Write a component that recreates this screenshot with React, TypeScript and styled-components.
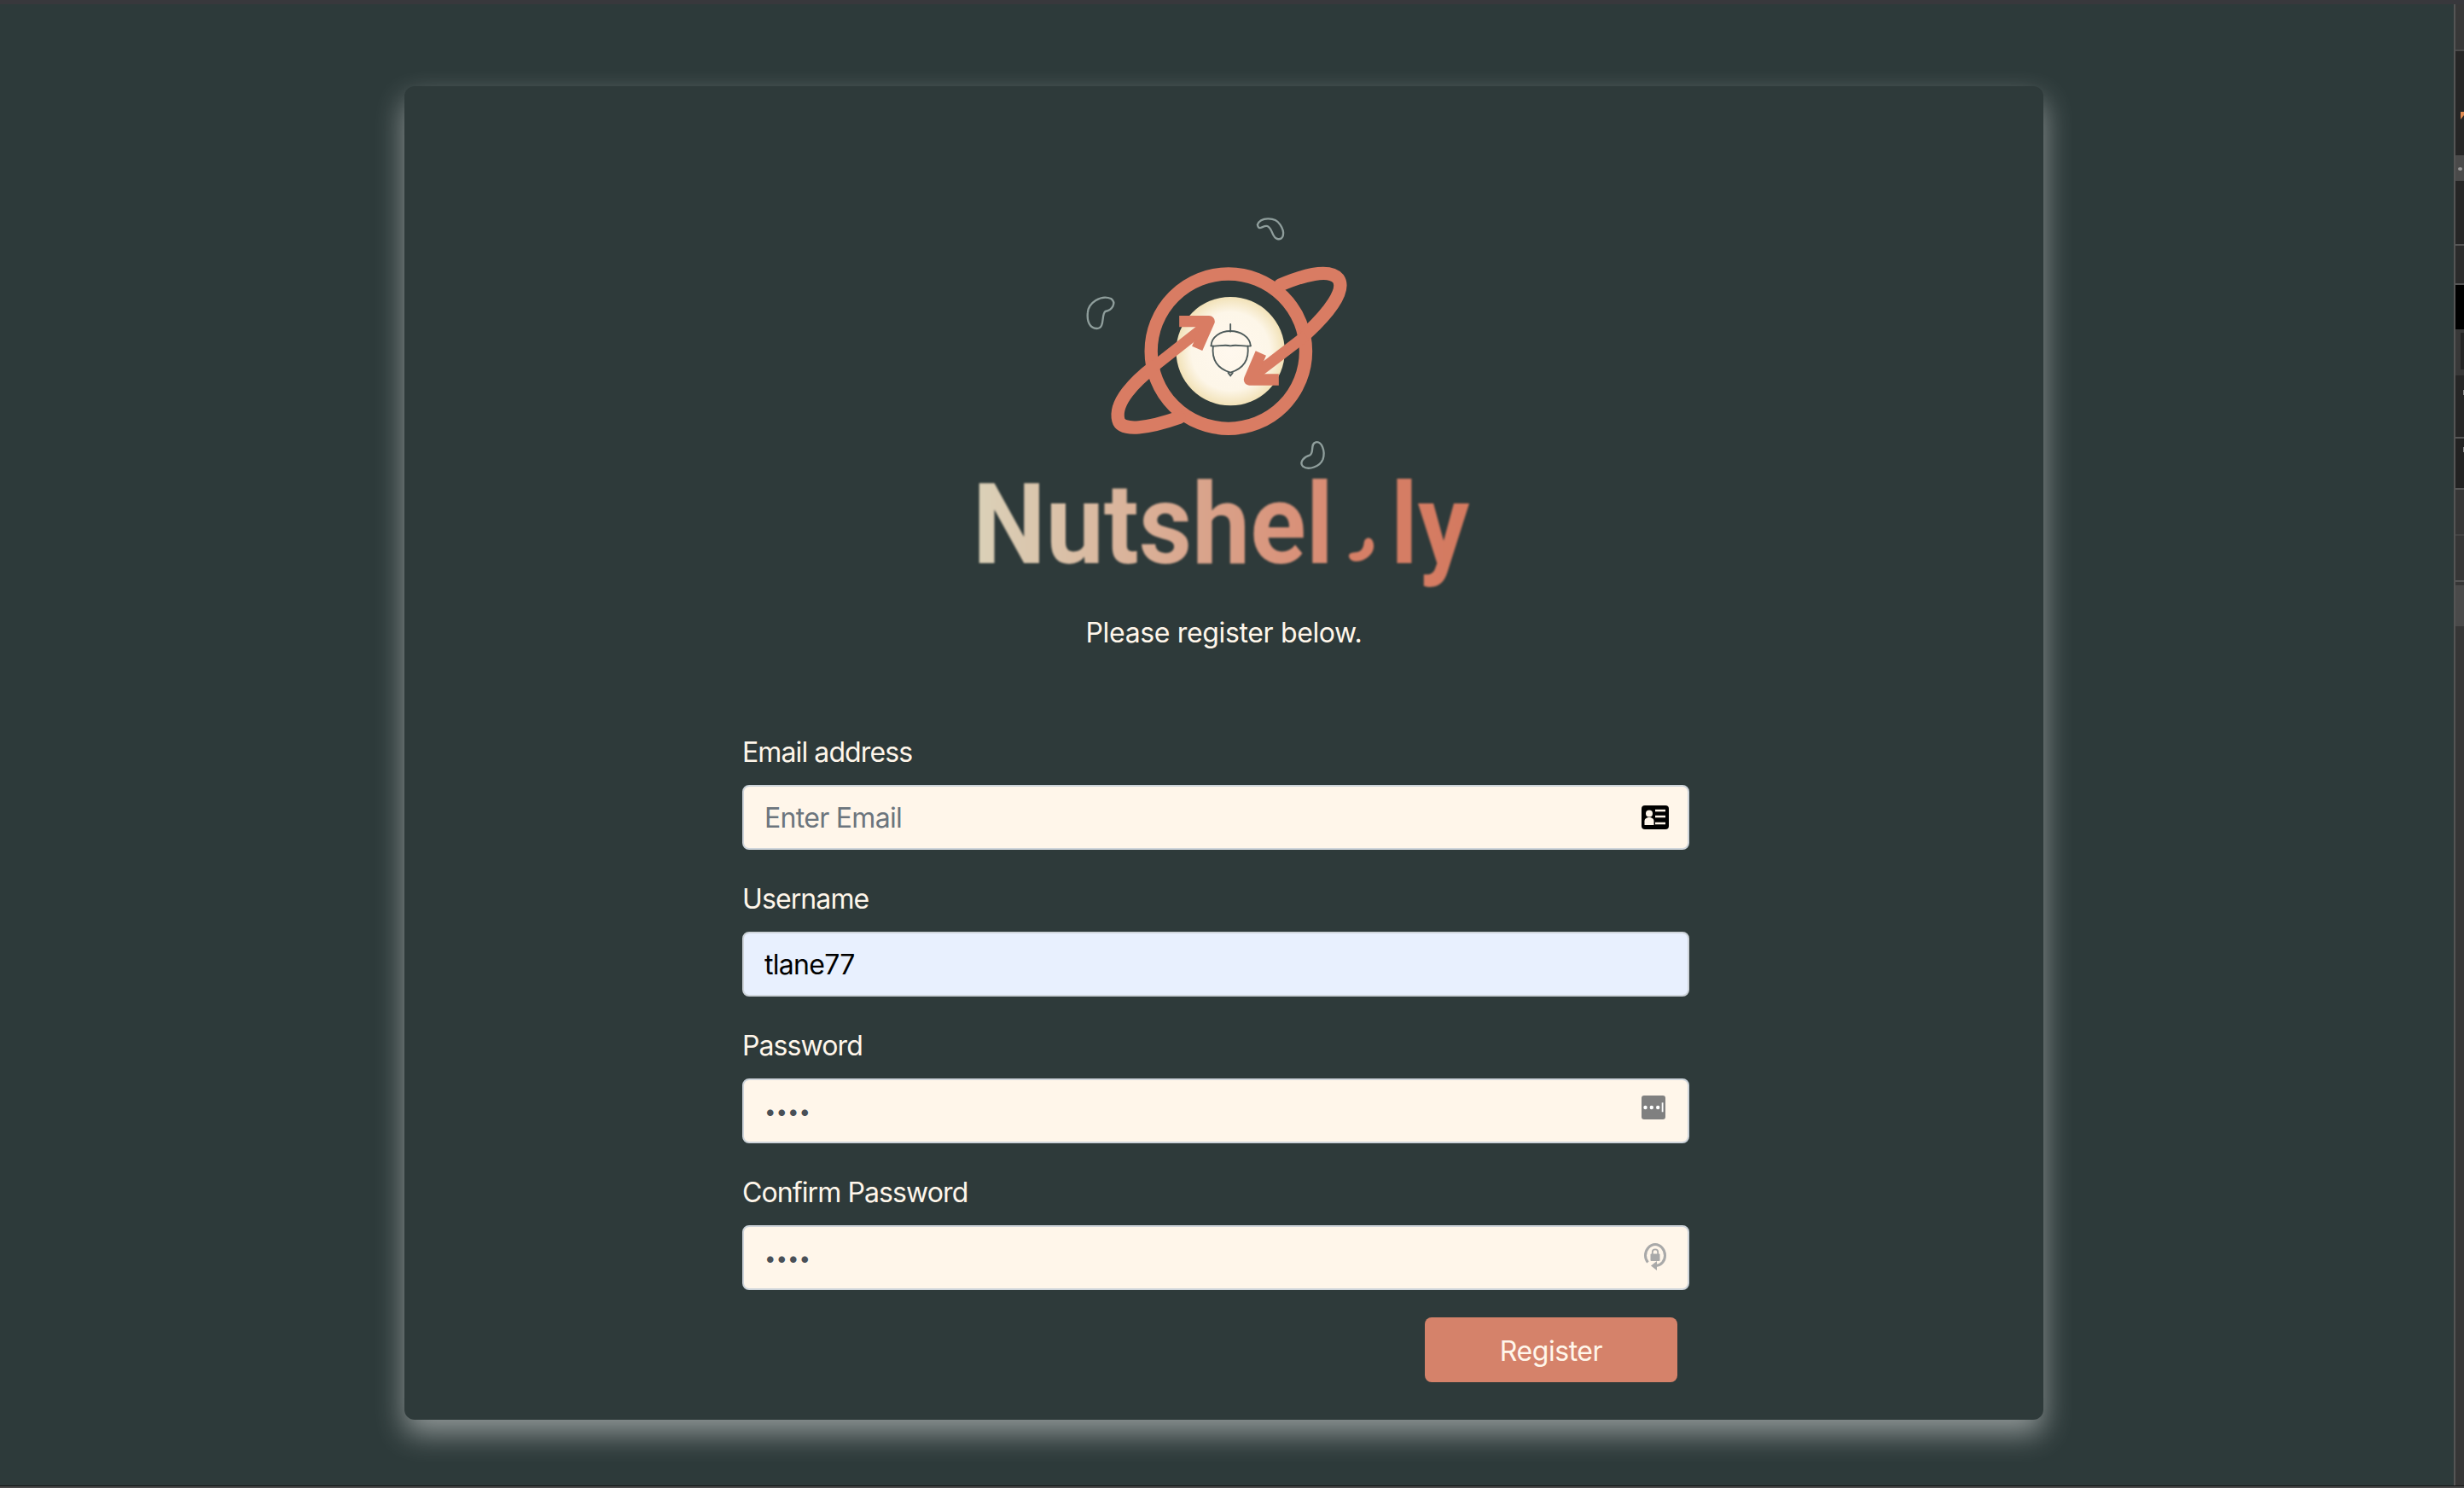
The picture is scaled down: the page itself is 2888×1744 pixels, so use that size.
import React from "react";
import styled, { createGlobalStyle } from "styled-components";

const Colors = {
  page: "#2d3a3a",
  cream: "#fff6ea",
  coral: "#d5826a",
  ring: "#d97c63",
  autofill: "#e8f0fe",
  border: "#ced4da",
};

const GlobalStyle = createGlobalStyle`
  html, body {
    margin: 0;
    padding: 0;
    background: ${Colors.page};
    overflow: hidden;
  }
  * {
    box-sizing: border-box;
  }
`;

const Screen = styled.div`
  width: 2888px;
  height: 1744px;
  display: flex;
  flex-direction: column;
  font-family: "Inter", "Liberation Sans", sans-serif;
  font-size: 32px;
  line-height: 48px;
`;

const TopEdge = styled.div`
  height: 5px;
  flex: none;
  background: #38383c;
`;

const BottomEdge = styled.div`
  height: 3px;
  flex: none;
  background: #4a4a4a;
  border-top: 1px solid #151515;
`;

const Middle = styled.div`
  flex: 1;
  min-height: 0;
  display: flex;
`;

const Main = styled.main`
  flex: 1;
  padding: 96px 0 0 474px;
  background: ${Colors.page};
`;

// devtools panel peeking in at the right edge
const SideStrip = styled.div`
  width: 12px;
  flex: none;
  display: flex;
  flex-direction: column;
  border-left: 2px solid #555;
`;

const Band = styled.div<{ $h?: number; $c: string }>`
  position: relative;
  flex: ${({ $h }) => ($h ? `0 0 ${$h}px` : "1")};
  background: ${({ $c }) => $c};
`;

const BandDot = styled.span`
  position: absolute;
  left: 3px;
  top: 14px;
  width: 5px;
  height: 4px;
  border-radius: 50%;
  background: #999;
`;

const BandMark = styled.span`
  position: absolute;
  left: 6px;
  top: 71px;
  width: 0;
  height: 0;
  border-left: 4px solid #e08a50;
  border-top: 4px solid #e08a50;
  border-right: 2px solid transparent;
  border-bottom: 5px solid transparent;
`;

const BandInset = styled.span`
  position: absolute;
  left: 6px;
  top: 4px;
  right: 0;
  height: 43px;
  background: #242424;
`;

const BandTick = styled.span<{ $top: number }>`
  position: absolute;
  right: 0;
  top: ${({ $top }) => $top}px;
  width: 1px;
  height: 6px;
  background: #8a8a8a;
`;

const Card = styled.section`
  width: 1921px;
  height: 1563px;
  display: flex;
  flex-direction: column;
  align-items: center;
  padding-top: 129px;
  border-radius: 12px;
  background: #2e3a3a;
  box-shadow: 0 16px 34px rgba(255, 255, 255, 0.47);
`;

const LogoMark = styled.svg`
  width: 400px;
  height: 310.67px;
  flex: none;
  overflow: visible;
  filter: blur(0.7px);
`;

const Wordmark = styled.div`
  width: 580px;
  height: 148.5px;
  flex: none;
  display: flex;
  margin-left: -9px;
  filter: blur(0.9px);
  font-family: "Roboto", "Liberation Sans", sans-serif;
  font-size: 132px;
  font-weight: 700;
  line-height: 148.5px;
`;

const WordPart = styled.span<{ $w: number }>`
  flex: 0 0 ${({ $w }) => $w}px;
  min-width: 0;
  height: 148.5px;
`;

const WordText = styled.span<{ $from: string; $to: string; $scale: number }>`
  display: inline-block;
  white-space: nowrap;
  transform: scaleX(${({ $scale }) => $scale});
  transform-origin: left center;
  background: linear-gradient(90deg, ${({ $from }) => $from}, ${({ $to }) => $to});
  -webkit-background-clip: text;
  background-clip: text;
  color: transparent;
`;

const WordDot = styled.svg`
  flex: none;
  width: 31px;
  height: 28px;
  margin: 89px 19px 0 21px;
`;

const Tagline = styled.p`
  margin: 29px 0 0;
  color: ${Colors.cream};
  letter-spacing: -0.35px;
`;

const Form = styled.form`
  align-self: flex-start;
  width: 1110px;
  margin: 90px 0 0 396px;
  display: flex;
  flex-direction: column;
`;

const Field = styled.div`
  margin-bottom: 32px;
`;

const Label = styled.label`
  display: block;
  margin-bottom: 16px;
  padding-top: 4px;
  color: ${Colors.cream};
  line-height: 44px;
  letter-spacing: -0.9px;
`;

const InputWrap = styled.div`
  position: relative;
`;

const Input = styled.input<{ $filled?: boolean; $secret?: boolean }>`
  display: block;
  width: 100%;
  height: 76px;
  padding: 12px 24px;
  border: 2px solid ${Colors.border};
  border-radius: 8px;
  outline: none;
  background: ${({ $filled }) => ($filled ? Colors.autofill : Colors.cream)};
  color: ${({ $filled }) => ($filled ? "#000" : "#495057")};
  font-family: inherit;
  font-size: ${({ $secret }) => ($secret ? 24 : 32)}px;
  line-height: 48px;
  letter-spacing: ${({ $secret }) => ($secret ? 0 : -0.7)}px;

  &::placeholder {
    color: #6c757d;
    opacity: 1;
  }
`;

const FieldIcon = styled.svg<{ $top: number; $right: number }>`
  position: absolute;
  top: ${({ $top }) => $top}px;
  right: ${({ $right }) => $right}px;
`;

const RegisterButton = styled.button`
  align-self: flex-end;
  width: 296px;
  height: 76px;
  margin-right: 14px;
  padding: 3px 0 0;
  border: none;
  border-radius: 8px;
  background: ${Colors.coral};
  color: ${Colors.cream};
  font-family: inherit;
  font-size: 32px;
  line-height: 48px;
  letter-spacing: -0.45px;
`;

const bands = [
  { h: 53, c: "#383838" },
  { h: 2, c: "#4a4a4a" },
  { h: 122, c: "#262626", mark: true },
  { h: 30, c: "#4a4a4a", dot: true },
  { h: 74, c: "#262626" },
  { h: 2, c: "#555" },
  { h: 44, c: "#2b2b2b" },
  { h: 2, c: "#555" },
  { h: 52, c: "#000" },
  { h: 54, c: "#383838", inset: true },
  { h: 72, c: "#262626", tick: 17 },
  { h: 2, c: "#555" },
  { h: 58, c: "#222", tick: 10 },
  { h: 2, c: "#555" },
  { h: 52, c: "#363636" },
  { h: 2, c: "#444" },
  { h: 52, c: "#363636" },
  { h: 2, c: "#555" },
  { h: 4, c: "#363636" },
  { h: 48, c: "#4a4a4a" },
  { c: "#363636" },
];

const Logo = () => (
  <LogoMark viewBox="-16.5 0 1200 932" aria-label="Nutshel.ly logo">
    <defs>
      <radialGradient id="moon" cx="50%" cy="50%" r="50%">
        <stop offset="0%" stopColor="#fff8ee" />
        <stop offset="72%" stopColor="#fdf6e8" />
        <stop offset="100%" stopColor="#f2e2b8" />
      </radialGradient>
    </defs>
    <circle cx="605" cy="545" r="191" fill="url(#moon)" />
    {/* planet and ring */}
    <g fill="none" stroke={Colors.ring} strokeWidth="46">
      <circle cx="598" cy="545" r="272" />
      <path d="M335 600C270 650 195 725 211 787C222 830 320 815 425 778" strokeLinecap="round" />
      <path d="M780 312C860 278 952 252 984 290C1012 330 950 410 875 480" strokeLinecap="round" />
      <path d="M335 600L515 458" strokeWidth="38" />
      <path d="M425 440L530 440L488 535" strokeWidth="40" strokeLinejoin="round" />
      <path d="M870 490L690 628" strokeWidth="38" />
      <path d="M712 552L672 645L775 645" strokeWidth="40" strokeLinejoin="round" />
    </g>
    {/* acorn */}
    <g fill="none" stroke="#4d5a5a" strokeWidth="5.5" strokeLinecap="round">
      <path d="M605 450V476" />
      <path d="M537 526C538 494 570 474 605 474C640 474 674 494 676 526" />
      <path d="M537 526C560 530 580 520 605 526C630 520 650 530 676 526" />
      <path d="M544 527C538 580 565 608 605 620C645 608 672 580 666 527" />
      <path d="M597 621L605 631L613 621" />
    </g>
    {/* nuts floating around */}
    <g fill="none" stroke="#8f9e9c" strokeWidth="7">
      <path d="M700 100C710 75 760 70 780 100C800 130 790 155 770 150C750 145 755 115 735 105C720 100 705 125 700 100Z" />
      <path d="M103 410C105 375 150 345 185 360C205 375 190 400 165 405C150 415 165 465 135 465C110 465 100 440 103 410Z" />
      <path d="M905 865C925 860 940 895 930 925C920 950 880 965 860 950C845 935 865 915 885 910C900 900 885 870 905 865Z" />
    </g>
  </LogoMark>
);

const IdCardIcon = () => (
  <FieldIcon $top={24} $right={24} width="32" height="28" viewBox="0 0 32 28">
    <rect width="32" height="28" rx="4" fill="#000" />
    <circle cx="9" cy="9.5" r="4" fill={Colors.cream} />
    <path d="M3.5 23V18.5C3.5 15.5 6 14 9 14C12 14 14.5 15.5 14.5 18.5V23Z" fill={Colors.cream} />
    <path d="M16 6H28M16 13H28M16 21H28" stroke={Colors.cream} strokeWidth="2.4" />
  </FieldIcon>
);

const PasswordKeyIcon = () => (
  <FieldIcon $top={20} $right={28} width="28" height="28" viewBox="0 0 28 28">
    <rect width="28" height="28" rx="3" fill="#808080" />
    <circle cx="4.5" cy="14" r="2.2" fill="#fff" />
    <circle cx="11.8" cy="14" r="2.2" fill="#fff" />
    <circle cx="19.2" cy="14" r="2.2" fill="#fff" />
    <rect x="23.7" y="8.3" width="1.8" height="11" fill="#fff" />
  </FieldIcon>
);

const LockRotateIcon = () => (
  <FieldIcon $top={21} $right={27} width="26" height="33" viewBox="0 0 26 33">
    <path d="M4.5 22.5C2.6 20.4 1.5 17.6 1.5 14.5C1.5 7.9 6.6 1.5 13 1.5C19.4 1.5 24.5 7.9 24.5 14.5C24.5 21 20 26 14 26.5" fill="none" stroke="#a9a9a9" strokeWidth="3" />
    <path d="M8 26.5L15 21V32Z" fill="#a9a9a9" />
    <rect x="7.5" y="12.5" width="11" height="8.5" rx="1" fill="#a9a9a9" />
    <path d="M9.8 13V10.5C9.8 8.5 11.2 7.3 13 7.3C14.8 7.3 16.2 8.5 16.2 10.5V13" fill="none" stroke="#a9a9a9" strokeWidth="1.8" />
  </FieldIcon>
);

export default function App() {
  return (
    <Screen>
      <GlobalStyle />
      <TopEdge />
      <Middle>
        <Main>
          <Card>
            <Logo />
            <Wordmark>
              <WordPart $w={419}>
                <WordText $from="#dbd2b9" $to="#d98a72" $scale={0.92}>
                  Nutshel
                </WordText>
              </WordPart>
              <WordDot viewBox="0 0 31 28">
                <path d="M22 1C27 -1 31 5 30 12C29 20 20 28 9 28C3 28 -1 22 2 19C6 16 12 19 16 14C20 9 17 3 22 1Z" fill="#d67f66" />
              </WordDot>
              <WordPart $w={90}>
                <WordText $from="#d67e65" $to="#d47a60" $scale={0.91}>
                  ly
                </WordText>
              </WordPart>
            </Wordmark>
            <Tagline>Please register below.</Tagline>
            <Form>
              <Field>
                <Label>Email address</Label>
                <InputWrap>
                  <Input placeholder="Enter Email" readOnly />
                  <IdCardIcon />
                </InputWrap>
              </Field>
              <Field>
                <Label>Username</Label>
                <InputWrap>
                  <Input $filled defaultValue="tlane77" readOnly />
                </InputWrap>
              </Field>
              <Field>
                <Label>Password</Label>
                <InputWrap>
                  <Input $secret type="password" defaultValue="abcd" readOnly />
                  <PasswordKeyIcon />
                </InputWrap>
              </Field>
              <Field>
                <Label>Confirm Password</Label>
                <InputWrap>
                  <Input $secret type="password" defaultValue="abcd" readOnly />
                  <LockRotateIcon />
                </InputWrap>
              </Field>
              <RegisterButton type="button">Register</RegisterButton>
            </Form>
          </Card>
        </Main>
        <SideStrip>
          {bands.map((b, i) => (
            <Band key={i} $h={b.h} $c={b.c}>
              {b.mark && <BandMark />}
              {b.dot && <BandDot />}
              {b.inset && <BandInset />}
              {b.tick && <BandTick $top={b.tick} />}
            </Band>
          ))}
        </SideStrip>
      </Middle>
      <BottomEdge />
    </Screen>
  );
}
